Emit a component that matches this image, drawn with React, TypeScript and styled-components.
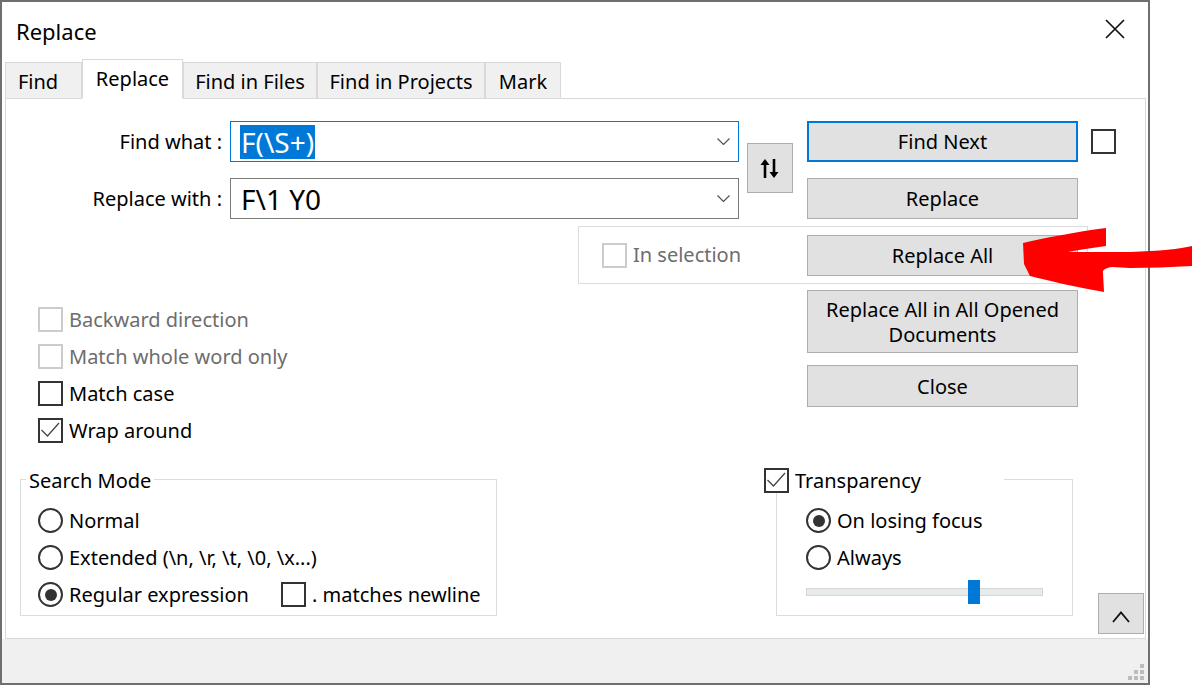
import React from 'react';
import styled, { createGlobalStyle } from 'styled-components';

const Global = createGlobalStyle`
  html, body { margin: 0; padding: 0; background: #fff; }
  body { font-family: "Noto Sans", "Open Sans", sans-serif; }
  #root { width: 1192px; height: 685px; overflow: hidden; }
  * { box-sizing: border-box; }
`;

const Stage = styled.div`
  position: relative;
  width: 1192px;
  height: 685px;
  background: #fff;
`;

const Window = styled.div`
  width: 1150px;
  height: 685px;
  border: 2px solid #6f6f6f;
  background: #fff;
  display: flex;
  flex-direction: column;
  color: #000;
  font-size: 20px;
  line-height: 1.2;
`;

const TitleBar = styled.div`
  height: 56px;
  flex: none;
  display: flex;
  align-items: center;
  justify-content: space-between;
  padding: 3px 23px 0 14px;
`;

const Title = styled.div`
  font-size: 22px;
`;

const CloseIcon = styled.svg`
  width: 20px;
  height: 20px;
  margin-top: -6px;
`;

const TabStrip = styled.div`
  height: 40px;
  flex: none;
  display: flex;
  align-items: flex-end;
  padding-left: 3px;
`;

const Tab = styled.div<{ $active?: boolean; $w: number; $offset?: number }>`
  width: ${p => p.$w}px;
  height: ${p => (p.$active ? 40 : 36)}px;
  background: ${p => (p.$active ? '#fff' : '#f0f0f0')};
  border: 1px solid #d9d9d9;
  border-bottom: ${p => (p.$active ? '1px solid #fff' : 'none')};
  margin-bottom: ${p => (p.$active ? '-1px' : '0')};
  position: relative;
  z-index: ${p => (p.$active ? 1 : 0)};
  display: flex;
  align-items: center;
  justify-content: center;
  padding-top: ${p => (p.$active ? '0' : '3px')};
  padding-right: ${p => p.$offset ?? 0}px;
`;

const Panel = styled.div`
  height: 541px;
  flex: none;
  margin: 0 2px 0 3px;
  border: 1px solid #d9d9d9;
  background: #fff;
  padding-top: 22px;
  display: flex;
  flex-direction: column;
`;

const RowA = styled.div`
  display: flex;
  align-items: flex-start;
`;

const FieldsGrid = styled.div`
  display: grid;
  grid-template-columns: 216px 509px 46px;
  grid-template-rows: 41px 41px;
  column-gap: 8px;
  row-gap: 16px;
`;

const FieldLabel = styled.div`
  display: flex;
  align-items: center;
  justify-content: flex-end;
  white-space: nowrap;
`;

const Combo = styled.div<{ $focused?: boolean }>`
  border: 1px solid ${p => (p.$focused ? '#0078d7' : '#7a7a7a')};
  display: flex;
  align-items: center;
  padding: 0 8px 0 9px;
  font-size: 28px;
  background: #fff;
`;

const ComboText = styled.span<{ $selected?: boolean }>`
  flex: 1;
  line-height: 34px;
  white-space: pre;
  & > span {
    background: ${p => (p.$selected ? '#0078d7' : 'transparent')};
    color: ${p => (p.$selected ? '#fff' : '#000')};
    display: inline-block;
    padding: 0 1px;
  }
`;

const Chevron = styled.svg`
  width: 13px;
  height: 7px;
  flex: none;
`;

const SwapButton = styled.div`
  grid-column: 3;
  grid-row: 1 / span 2;
  align-self: start;
  margin-top: 22px;
  height: 50px;
  background: #e1e1e1;
  border: 1px solid #adadad;
  display: flex;
  align-items: center;
  justify-content: center;
`;

const ButtonColumn = styled.div`
  display: flex;
  flex-direction: column;
  gap: 16px;
  margin-left: 14px;
`;

const ButtonLine = styled.div`
  display: flex;
  align-items: center;
  gap: 13px;
`;

const Button = styled.div<{ $default?: boolean; $h?: number }>`
  width: 271px;
  height: ${p => p.$h ?? 41}px;
  background: #e1e1e1;
  border: ${p => (p.$default ? '2px solid #0078d7' : '1px solid #adadad')};
  display: flex;
  align-items: center;
  justify-content: center;
  text-align: center;
  line-height: 25px;
  flex: none;
`;

const SelectionGroup = styled.div`
  margin: 7px 0 0 572px;
  width: 510px;
  height: 58px;
  border: 1px solid #dcdcdc;
  display: flex;
  align-items: center;
  padding: 0 9px 0 23px;
  & > ${Button} {
    margin-left: auto;
  }
`;

const RowC = styled.div`
  display: flex;
  align-items: flex-start;
`;

const OptionsList = styled.div`
  margin: 23px 0 0 32px;
  display: flex;
  flex-direction: column;
  gap: 12px;
`;

const RightStack = styled.div`
  margin: 6px 67px 0 auto;
  display: flex;
  flex-direction: column;
  gap: 12px;
`;

const Option = styled.div<{ $disabled?: boolean }>`
  display: flex;
  align-items: center;
  gap: 6px;
  height: 25px;
  white-space: nowrap;
  color: ${p => (p.$disabled ? '#6d6d6d' : '#000')};
`;

const Box = styled.span<{ $disabled?: boolean }>`
  width: 25px;
  height: 25px;
  flex: none;
  border: 2px solid ${p => (p.$disabled ? '#cccccc' : '#333')};
  background: #fff;
  display: flex;
  align-items: center;
  justify-content: center;
`;

const Round = styled.span<{ $checked?: boolean }>`
  width: 25px;
  height: 25px;
  flex: none;
  border: 2px solid #333;
  border-radius: 50%;
  background: #fff;
  display: flex;
  align-items: center;
  justify-content: center;
  &::after {
    content: '';
    width: 12px;
    height: 12px;
    border-radius: 50%;
    background: ${p => (p.$checked ? '#333' : 'transparent')};
  }
`;

const RowD = styled.div`
  display: flex;
  align-items: flex-start;
  margin-top: 36px;
`;

const GroupBox = styled.div<{ $ml: number; $w: number; $pl: number }>`
  position: relative;
  margin-left: ${p => p.$ml}px;
  width: ${p => p.$w}px;
  height: 137px;
  border: 1px solid #dcdcdc;
  padding: 28px 0 0 ${p => p.$pl}px;
  display: flex;
  flex-direction: column;
  gap: 12px;
`;

const Legend = styled.div<{ $left: number; $w?: number }>`
  position: absolute;
  top: -12px;
  left: ${p => p.$left}px;
  ${p => (p.$w ? `width: ${p.$w}px;` : '')}
  height: 25px;
  padding: 0 3px;
  background: #fff;
  display: flex;
  align-items: center;
  gap: 6px;
  white-space: nowrap;
`;

const RegexLine = styled.div`
  display: grid;
  grid-template-columns: 243px auto;
  align-items: center;
`;

const SliderRow = styled.div`
  margin-top: -2px;
  height: 24px;
  width: 237px;
  display: flex;
  align-items: center;
  position: relative;
`;

const Track = styled.div`
  width: 100%;
  height: 8px;
  background: #e7eaea;
  border: 1px solid #d6d6d6;
`;

const Thumb = styled.div`
  position: absolute;
  top: 0;
  width: 12px;
  height: 24px;
  background: #0078d7;
`;

const CollapseButton = styled.div`
  margin: 114px 0 0 25px;
  width: 46px;
  height: 41px;
  background: #e1e1e1;
  border: 1px solid #adadad;
  display: flex;
  align-items: center;
  justify-content: center;
  padding-top: 6px;
`;

const Footer = styled.div`
  flex: 1;
  background: #f0f0f0;
  display: flex;
  justify-content: flex-end;
  align-items: flex-end;
  padding: 0 4px 3px 0;
`;

const Annotation = styled.svg`
  position: absolute;
  left: 0;
  top: 0;
  width: 1192px;
  height: 685px;
  pointer-events: none;
`;

const Check = () => (
  <svg width="21" height="21" viewBox="0 0 21 21">
    <polyline points="1.5,10 7.5,16 19,3" fill="none" stroke="#444" strokeWidth="1.3" />
  </svg>
);

const CheckBox = ({ checked, disabled }: { checked?: boolean; disabled?: boolean }) => (
  <Box $disabled={disabled}>{checked ? <Check /> : null}</Box>
);

const ComboChevron = () => (
  <Chevron viewBox="0 0 13 7">
    <polyline points="0.5,0.5 6.5,6.5 12.5,0.5" fill="none" stroke="#555" strokeWidth="1.2" />
  </Chevron>
);

export default function App() {
  return (
    <Stage>
      <Global />
      <Window>
        <TitleBar>
          <Title>Replace</Title>
          <CloseIcon viewBox="0 0 20 20">
            <path d="M1 1 L19 19 M19 1 L1 19" stroke="#111" strokeWidth="1.7" fill="none" />
          </CloseIcon>
        </TitleBar>
        <TabStrip>
          <Tab $w={77} $offset={11}>Find</Tab>
          <Tab $w={101} $active>Replace</Tab>
          <Tab $w={134}>Find in Files</Tab>
          <Tab $w={168}>Find in Projects</Tab>
          <Tab $w={76}>Mark</Tab>
        </TabStrip>
        <Panel>
          <RowA>
            <FieldsGrid>
              <FieldLabel>Find what :</FieldLabel>
              <Combo $focused>
                <ComboText $selected>
                  <span>F(\S+)</span>
                </ComboText>
                <ComboChevron />
              </Combo>
              <SwapButton>
                <svg width="20" height="21" viewBox="0 0 20 21">
                  <path d="M5 20 V3" stroke="#000" strokeWidth="2.6" />
                  <path d="M0.5 7 L5 1 L9.5 7 Z" fill="#000" />
                  <path d="M14 1 V18" stroke="#000" strokeWidth="2.6" />
                  <path d="M9.5 14 L14 20 L18.5 14 Z" fill="#000" />
                </svg>
              </SwapButton>
              <FieldLabel>Replace with :</FieldLabel>
              <Combo>
                <ComboText>
                  <span>F\1 Y0</span>
                </ComboText>
                <ComboChevron />
              </Combo>
            </FieldsGrid>
            <ButtonColumn>
              <ButtonLine>
                <Button $default>Find Next</Button>
                <CheckBox />
              </ButtonLine>
              <Button>Replace</Button>
            </ButtonColumn>
          </RowA>
          <SelectionGroup>
            <Option $disabled>
              <CheckBox disabled />
              In selection
            </Option>
            <Button>Replace All</Button>
          </SelectionGroup>
          <RowC>
            <OptionsList>
              <Option $disabled>
                <CheckBox disabled />
                Backward direction
              </Option>
              <Option $disabled>
                <CheckBox disabled />
                Match whole word only
              </Option>
              <Option>
                <CheckBox />
                Match case
              </Option>
              <Option>
                <CheckBox checked />
                Wrap around
              </Option>
            </OptionsList>
            <RightStack>
              <Button $h={63}>
                Replace All in All Opened
                <br />
                Documents
              </Button>
              <Button $h={42}>Close</Button>
            </RightStack>
          </RowC>
          <RowD>
            <GroupBox $ml={14} $w={477} $pl={17}>
              <Legend $left={5}>Search Mode</Legend>
              <Option>
                <Round />
                Normal
              </Option>
              <Option>
                <Round />
                Extended (\n, \r, \t, \0, \x...)
              </Option>
              <RegexLine>
                <Option>
                  <Round $checked />
                  Regular expression
                </Option>
                <Option>
                  <CheckBox />. matches newline
                </Option>
              </RegexLine>
            </GroupBox>
            <GroupBox $ml={279} $w={297} $pl={29}>
              <Legend $left={-16} $w={243}>
                <CheckBox checked />
                Transparency
              </Legend>
              <Option>
                <Round $checked />
                On losing focus
              </Option>
              <Option>
                <Round />
                Always
              </Option>
              <SliderRow>
                <Track />
                <Thumb style={{ left: 162 }} />
              </SliderRow>
            </GroupBox>
            <CollapseButton>
              <svg width="18" height="12" viewBox="0 0 18 12">
                <polyline points="1,11 9,1.5 17,11" fill="none" stroke="#111" strokeWidth="1.8" />
              </svg>
            </CollapseButton>
          </RowD>
        </Panel>
        <Footer>
          <svg width="16" height="16" viewBox="0 0 16 16">
            <rect x="12" y="0" width="4" height="4" fill="#bcbcbc" />
            <rect x="6" y="6" width="4" height="4" fill="#bcbcbc" />
            <rect x="12" y="6" width="4" height="4" fill="#bcbcbc" />
            <rect x="0" y="12" width="4" height="4" fill="#bcbcbc" />
            <rect x="6" y="12" width="4" height="4" fill="#bcbcbc" />
            <rect x="12" y="12" width="4" height="4" fill="#bcbcbc" />
          </svg>
        </Footer>
      </Window>
      <Annotation viewBox="0 0 1192 685">
        <path
          d="M1023,243 C1045,238 1075,232 1106,228 L1106,246 C1092,248 1078,250 1068,252 L1130,252 C1160,251 1180,249 1192,246 L1192,266 C1170,267 1150,268 1130,268 L1112,267 C1106,268 1102,270 1103,273 L1104,292 C1080,288 1050,281 1030,276 L1024,264 Z"
          fill="#ff0000"
        />
      </Annotation>
    </Stage>
  );
}
